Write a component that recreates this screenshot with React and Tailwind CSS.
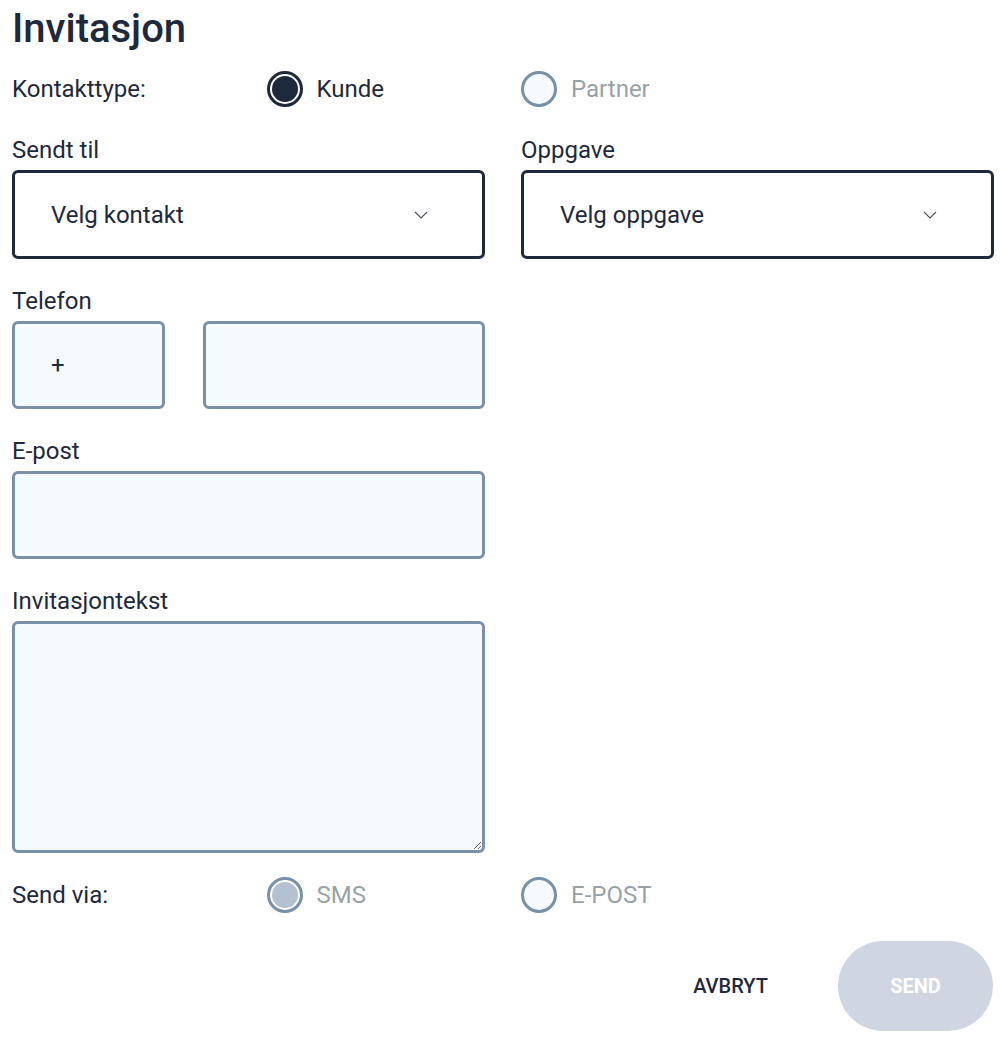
import React from "react";

const font = { fontFamily: "Roboto, 'Liberation Sans', sans-serif" };

function Chevron() {
  return (
    <svg width="14" height="8" viewBox="0 0 14 8" fill="none">
      <path d="M1 1l6 6 6-6" stroke="#4a5260" strokeWidth="1.1" />
    </svg>
  );
}

function Radio({ checked, disabled, label }) {
  let ring = "border-[#1e293b]";
  let dot = "bg-[#1e293b]";
  let fill = "bg-white";
  let text = "text-[#1e293b]";
  if (!checked) {
    ring = "border-[#7890a8]";
    dot = "bg-[#f5faff]";
    fill = "bg-[#f5faff]";
    text = "text-[#98a2a6]";
  }
  if (checked && disabled) {
    ring = "border-[#7890a8]";
    dot = "bg-[#b4c1d1]";
    fill = "bg-white";
    text = "text-[#98a2a6]";
  }
  return (
    <div className="flex items-center gap-[14px]">
      <div className={`w-[36px] h-[36px] rounded-full border-[3px] p-[2px] ${ring} ${fill}`}>
        <div className={`w-full h-full rounded-full ${dot}`} />
      </div>
      <span className={`text-[24px] ${text}`}>{label}</span>
    </div>
  );
}

function Label({ children }) {
  return <div className="h-[40px] flex items-center text-[24px] text-[#1e293b]">{children}</div>;
}

const inputCls =
  "h-[88px] rounded-[6px] border-[3px] border-[#7890a8] bg-[#f5faff] px-[36px] text-[24px] text-[#1e293b] outline-none";

export default function App() {
  return (
    <div className="bg-white min-h-[1039px] text-[#1e293b]" style={font}>
      <div className="ml-[12px] w-[982px] flex flex-col">
        <div className="h-[58px] flex items-center text-[40px] font-medium leading-none">Invitasjon</div>
        <div className="h-[62px] grid grid-cols-4 gap-x-[36px] items-center">
          <div className="text-[24px]">Kontakttype:</div>
          <Radio checked label="Kunde" />
          <Radio label="Partner" />
        </div>
        <div className="mt-[10px] grid grid-cols-2 gap-x-[36px]">
          <div className="flex flex-col">
            <Label>Sendt til</Label>
            <div className="h-[89px] rounded-[6px] border-[3px] border-[#1e293b] bg-white flex items-center justify-between pl-[36px] pr-[54px]">
              <span className="text-[24px]">Velg kontakt</span>
              <Chevron />
            </div>
          </div>
          <div className="flex flex-col">
            <Label>Oppgave</Label>
            <div className="h-[89px] rounded-[6px] border-[3px] border-[#1e293b] bg-white flex items-center justify-between pl-[36px] pr-[54px]">
              <span className="text-[24px]">Velg oppgave</span>
              <Chevron />
            </div>
          </div>
        </div>
        <div className="mt-[22px] w-[473px] flex flex-col">
          <Label>Telefon</Label>
          <div className="flex gap-[38px]">
            <div className={`${inputCls} w-[153px] flex items-center`}>+</div>
            <div className={`${inputCls} flex-1`} />
          </div>
        </div>
        <div className="mt-[22px] w-[473px] flex flex-col">
          <Label>E-post</Label>
          <div className={`${inputCls}`} />
        </div>
        <div className="mt-[22px] w-[473px] flex flex-col">
          <Label>Invitasjontekst</Label>
          <textarea className="h-[232px] block rounded-[6px] border-[3px] border-[#7890a8] bg-[#f5faff] p-[12px] text-[24px] outline-none" />
        </div>
        <div className="mt-[22px] h-[40px] grid grid-cols-4 gap-x-[36px] items-center">
          <div className="text-[24px]">Send via:</div>
          <Radio checked disabled label="SMS" />
          <Radio label="E-POST" />
        </div>
        <div className="mt-[26px] flex justify-end gap-[30px] pr-[1px]">
          <button className="w-[155px] h-[90px] rounded-full text-[20px] font-medium text-[#1e293b]">AVBRYT</button>
          <button className="w-[155px] h-[90px] rounded-full bg-[#cfd6e1] text-[20px] font-bold text-white">SEND</button>
        </div>
      </div>
    </div>
  );
}
